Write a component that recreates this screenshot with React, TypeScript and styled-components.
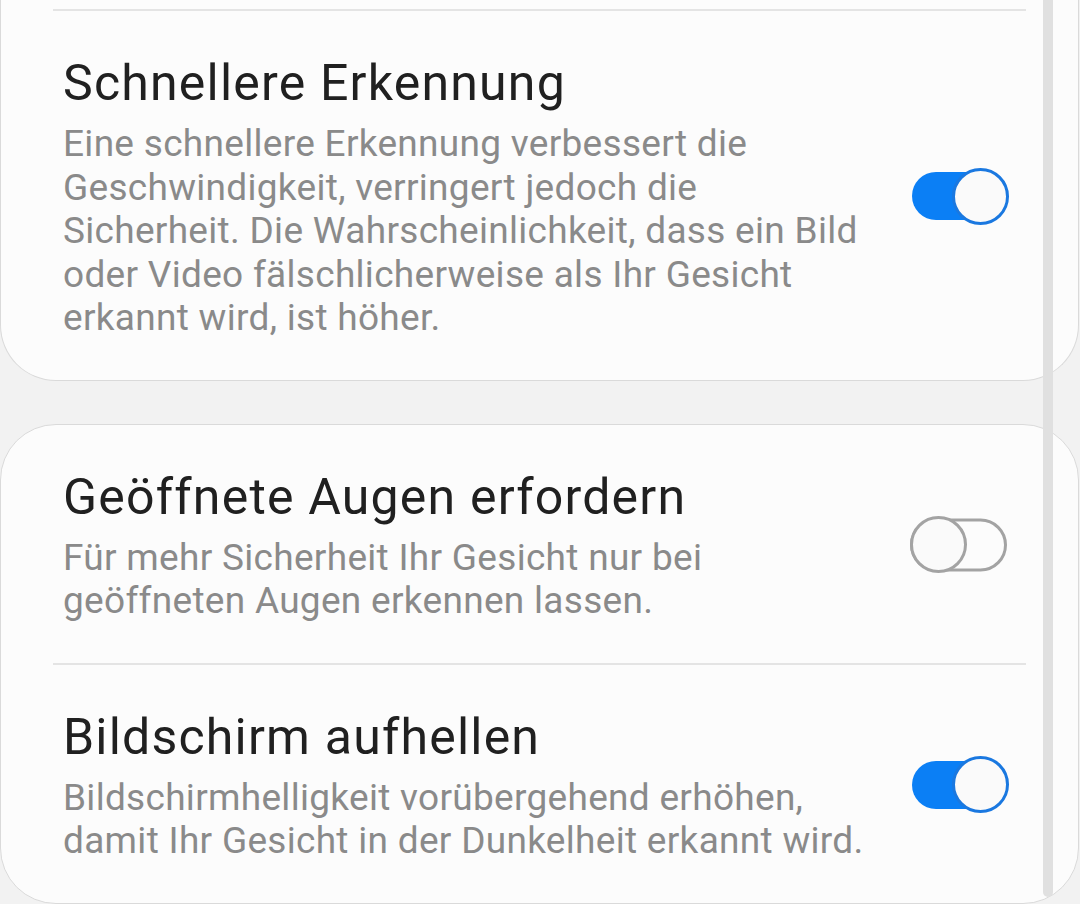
import React from "react";
import styled, { createGlobalStyle } from "styled-components";

const GlobalStyle = createGlobalStyle`
  html, body {
    margin: 0;
    padding: 0;
    background-color: #f2f2f2;
  }
  body {
    font-family: Roboto, "Noto Sans", "Liberation Sans", sans-serif;
  }
`;

const Page = styled.div`
  position: relative;
  width: 1080px;
  height: 904px;
  overflow: hidden;
  background-color: #f2f2f2;
  display: flex;
  flex-direction: column;
  gap: 43px;
`;

const Card = styled.div<{ cutTop?: boolean }>`
  width: 1079px;
  box-sizing: border-box;
  background-color: #fcfcfc;
  border: 1px solid #dadada;
  border-top: ${(props) => (props.cutTop ? "none" : "1px solid #dadada")};
  border-radius: ${(props) => (props.cutTop ? "0 0 56px 56px" : "56px")};
  padding-top: ${(props) => (props.cutTop ? "9px" : "0")};
  display: flex;
  flex-direction: column;
`;

const Divider = styled.div`
  height: 2px;
  margin: 0 52px;
  background-color: #e4e4e4;
`;

const Row = styled.div`
  display: flex;
  flex-direction: row;
  align-items: center;
  padding: 42px 69px 40px 62px;
`;

const TextBlock = styled.div`
  flex: 1;
  min-width: 0;
  white-space: nowrap;
`;

const Titel = styled.div`
  font-size: 50px;
  line-height: 60px;
  letter-spacing: 1.2px;
  color: #202020;
  margin-bottom: 9px;
`;

const Beschreibung = styled.div`
  font-size: 37px;
  line-height: 43.5px;
  letter-spacing: 0.3px;
  color: #8a8a8a;
`;

const SwitchWrapper = styled.div`
  position: relative;
  width: 99px;
  height: 57px;
  flex-shrink: 0;
`;

const Track = styled.div<{ on: boolean }>`
  position: absolute;
  top: 50%;
  transform: translateY(-50%);
  box-sizing: border-box;
  left: ${(props) => (props.on ? "2px" : "0")};
  width: ${(props) => (props.on ? "92px" : "97px")};
  height: ${(props) => (props.on ? "48px" : "53px")};
  border-radius: 27px;
  background-color: ${(props) => (props.on ? "#0b7ff5" : "transparent")};
  border: ${(props) => (props.on ? "none" : "3px solid #a3a3a3")};
`;

const Thumb = styled.div<{ on: boolean }>`
  position: absolute;
  top: 0;
  ${(props) => (props.on ? "right: 0;" : "left: 0;")}
  box-sizing: border-box;
  width: 57px;
  height: 57px;
  border-radius: 50%;
  background-color: #fafafa;
  border: 3px solid ${(props) => (props.on ? "#1a78e0" : "#a3a3a3")};
`;

const Scrollbar = styled.div`
  position: absolute;
  top: 0;
  right: 27px;
  width: 10px;
  height: 897px;
  border-radius: 0 0 5px 5px;
  background-color: #e0e0e0;
`;

interface SwitchProps {
  on: boolean;
}

function Switch({ on }: SwitchProps) {
  return (
    <SwitchWrapper>
      <Track on={on} />
      <Thumb on={on} />
    </SwitchWrapper>
  );
}

interface EinstellungProps {
  titel: string;
  zeilen: string[];
  on: boolean;
}

function Einstellung({ titel, zeilen, on }: EinstellungProps) {
  return (
    <Row>
      <TextBlock>
        <Titel>{titel}</Titel>
        <Beschreibung>
          {zeilen.map((z, i) => (
            <div key={i}>{z}</div>
          ))}
        </Beschreibung>
      </TextBlock>
      <Switch on={on} />
    </Row>
  );
}

export default function App() {
  return (
    <>
      <GlobalStyle />
      <Page>
        <Card cutTop>
          <Divider />
          <Einstellung
            titel="Schnellere Erkennung"
            zeilen={[
              "Eine schnellere Erkennung verbessert die",
              "Geschwindigkeit, verringert jedoch die",
              "Sicherheit. Die Wahrscheinlichkeit, dass ein Bild",
              "oder Video fälschlicherweise als Ihr Gesicht",
              "erkannt wird, ist höher.",
            ]}
            on={true}
          />
        </Card>
        <Card>
          <Einstellung
            titel="Geöffnete Augen erfordern"
            zeilen={[
              "Für mehr Sicherheit Ihr Gesicht nur bei",
              "geöffneten Augen erkennen lassen.",
            ]}
            on={false}
          />
          <Divider />
          <Einstellung
            titel="Bildschirm aufhellen"
            zeilen={[
              "Bildschirmhelligkeit vorübergehend erhöhen,",
              "damit Ihr Gesicht in der Dunkelheit erkannt wird.",
            ]}
            on={true}
          />
        </Card>
        <Scrollbar />
      </Page>
    </>
  );
}
